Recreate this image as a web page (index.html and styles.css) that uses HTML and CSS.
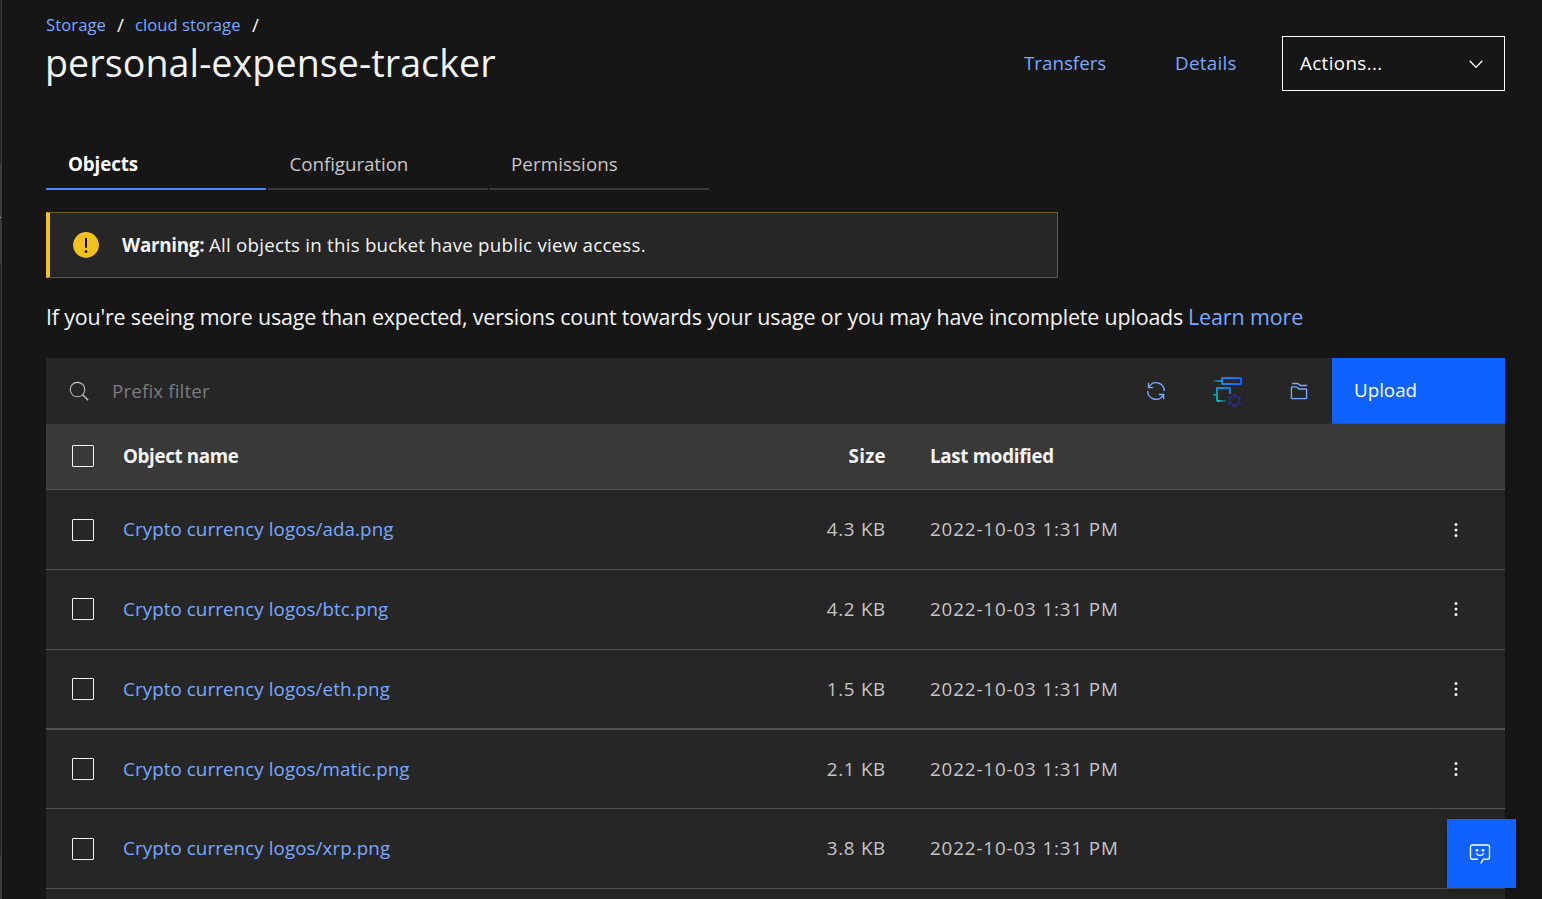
FILE: index.html
```
<!DOCTYPE html>
<html lang="en">
<head>
<meta charset="utf-8">
<title>personal-expense-tracker</title>
<link rel="stylesheet" href="styles.css">
</head>
<body>
<div class="app">
  <aside class="rail"><i class="rail-top"></i><i class="rail-active"></i><i class="rail-mark"></i><i class="rail-active rail-active-end"></i><i class="rail-rest"></i><i class="rail-active"></i></aside>
  <main class="main">
    <header class="header">
      <div>
        <nav class="crumbs"><a class="crumb-first">Storage</a><span>/</span><a class="crumb-second">cloud storage</a><span>/</span></nav>
        <h1 class="title">personal-expense-tracker</h1>
      </div>
      <div class="head-actions">
        <a class="transfers">Transfers</a>
        <a class="details">Details</a>
        <button class="dropdown"><span>Actions...</span>
          <svg width="22" height="22" viewBox="0 0 16 16" fill="#f4f4f4"><path d="M8 11 3 6l.7-.7L8 9.6l4.3-4.3.7.7z"/></svg>
        </button>
      </div>
    </header>

    <nav class="tabs">
      <a class="tab tab-selected">Objects</a>
      <a class="tab tab-config">Configuration</a>
      <a class="tab">Permissions</a>
    </nav>

    <section class="notice">
      <svg width="28" height="28" viewBox="0 0 20 20"><circle cx="10" cy="10" r="9.2" fill="#f1c21b"/><path d="M9.3 5h1.4v7H9.3z"/><circle cx="10" cy="14.7" r="1"/></svg>
      <p><b>Warning:</b><span>All objects in this bucket have public view access.</span></p>
    </section>

    <p class="usage"><span>If you're seeing more usage than expected, versions count towards your usage or you may have incomplete uploads</span><a>Learn more</a></p>

    <section class="table">
      <div class="toolbar">
        <svg class="search" width="22" height="22" viewBox="0 0 16 16" fill="#c6c6c6"><path d="m15 14.3-3.8-3.8a5.6 5.6 0 1 0-.7.7l3.8 3.8zM2 7a4.9 4.9 0 1 1 9.8 0A4.9 4.9 0 0 1 2 7z"/></svg>
        <span class="filter">Prefix filter</span>
        <div class="tools">
          <svg class="refresh" width="22" height="22" viewBox="0 0 32 32" fill="#78a9ff"><path d="M12 10H6.78A11 11 0 0 1 27 16h2A13 13 0 0 0 6 7.68V4H4v8h8zM20 22h5.22A11 11 0 0 1 5 16H3a13 13 0 0 0 23 8.32V28h2v-8h-8z"/></svg>
          <svg class="query" width="33" height="33" viewBox="0 0 33 33" fill="none">
            <defs>
              <linearGradient id="top" gradientUnits="userSpaceOnUse" x1="1" y1="0" x2="31" y2="0"><stop stop-color="#08bdba" stop-opacity="0"/><stop offset=".25" stop-color="#1192e8"/><stop offset="1" stop-color="#0f62fe"/></linearGradient>
              <linearGradient id="box" x1="0" y1="1" x2="1" y2="0"><stop stop-color="#08bdba"/><stop offset="1" stop-color="#0f77e8"/></linearGradient>
              <linearGradient id="tail" gradientUnits="userSpaceOnUse" x1="7" y1="0" x2="17" y2="0"><stop stop-color="#08bdba"/><stop offset="1" stop-color="#08bdba" stop-opacity="0"/></linearGradient>
            </defs>
            <path d="M1 6h10" stroke="url(#top)" stroke-width="1.8"/>
            <rect x="11" y="3" width="19" height="6" rx=".7" stroke="url(#top)" stroke-width="2"/>
            <path d="M6 26V13h13v6" stroke="url(#box)" stroke-width="1.800"/>
            <path d="M6 26h11v.1" stroke="url(#tail)" stroke-width="1.800"/>
            <path d="M2 19.800h4" stroke="#08a5a8" stroke-width="1.600"/>
            <circle cx="23.500" cy="25.500" r="4.600" stroke="#262f78" stroke-width="2"/>
            <path d="M23.500 18v3M23.500 30v3M17 21.700l2.600 1.500M27.400 27.800l2.600 1.500M17 29.300l2.600-1.500M27.400 23.200l2.600-1.500" stroke="#262f78" stroke-width="2.200"/>
          </svg>
          <svg width="22" height="22" viewBox="0 0 32 32" fill="#78a9ff"><path d="M26 28H6a2 2 0 0 1-2-2V11a2 2 0 0 1 2-2h5.670a2 2 0 0 1 1.200.400L16.670 12H26a2 2 0 0 1 2 2v12a2 2 0 0 1-2 2zM11.670 11H6v15h20V14H16z"/><path d="M28 9H17.670l-4-3H6V4h7.670a2 2 0 0 1 1.200.400L18.330 7H28z"/></svg>
        </div>
        <button class="upload">Upload</button>
      </div>

      <div class="row row-head row-up"><i class="box"></i><b class="c-name">Object name</b><b class="c-size">Size</b><b class="c-date">Last modified</b></div>
      <div class="row"><i class="box"></i><a class="c-name">Crypto currency logos/ada.png</a><span class="c-size">4.3 KB</span><span class="c-date">2022-10-03 1:31 PM</span><svg class="menu" width="6" height="16" viewBox="0 0 6 16"><circle cx="3" cy="2.5" r="1.5"/><circle cx="3" cy="8" r="1.5"/><circle cx="3" cy="13.5" r="1.5"/></svg></div>
      <div class="row row-up"><i class="box"></i><a class="c-name">Crypto currency logos/btc.png</a><span class="c-size">4.2 KB</span><span class="c-date">2022-10-03 1:31 PM</span><svg class="menu" width="6" height="16" viewBox="0 0 6 16"><circle cx="3" cy="2.5" r="1.5"/><circle cx="3" cy="8" r="1.5"/><circle cx="3" cy="13.5" r="1.5"/></svg></div>
      <div class="row row-thick"><i class="box"></i><a class="c-name">Crypto currency logos/eth.png</a><span class="c-size">1.5 KB</span><span class="c-date">2022-10-03 1:31 PM</span><svg class="menu" width="6" height="16" viewBox="0 0 6 16"><circle cx="3" cy="2.5" r="1.5"/><circle cx="3" cy="8" r="1.5"/><circle cx="3" cy="13.5" r="1.5"/></svg></div>
      <div class="row row-short"><i class="box"></i><a class="c-name">Crypto currency logos/matic.png</a><span class="c-size">2.1 KB</span><span class="c-date">2022-10-03 1:31 PM</span><svg class="menu" width="6" height="16" viewBox="0 0 6 16"><circle cx="3" cy="2.5" r="1.5"/><circle cx="3" cy="8" r="1.5"/><circle cx="3" cy="13.5" r="1.5"/></svg></div>
      <div class="row"><i class="box"></i><a class="c-name">Crypto currency logos/xrp.png</a><span class="c-size">3.8 KB</span><span class="c-date">2022-10-03 1:31 PM</span></div>
      <div class="row"></div>
    </section>
  </main>
  <button class="chat" aria-label="Chat">
    <svg width="22" height="22" viewBox="0 0 22 22" fill="none" stroke="#fff" stroke-width="1.4"><path d="M8.8 16.2H3.4A1.9 1.9 0 0 1 1.5 14.3V3.9A1.9 1.9 0 0 1 3.4 2h15.2a1.9 1.9 0 0 1 1.9 1.9v10.4a1.9 1.9 0 0 1-1.9 1.9h-4.200l-2.700 4.200"/><path d="M7.300 10.300c1.400 3 6 3 7.400 0"/><circle cx="8" cy="7.200" r="1.300" fill="#fff" stroke="none"/><circle cx="14" cy="7.200" r="1.300" fill="#fff" stroke="none"/></svg>
  </button>
</div>
</body>
</html>
```
FILE: styles.css
```
* { box-sizing: border-box; }

body {
  margin: 0;
  background: #161616;
  color: #f4f4f4;
  font: 18.75px/26px "Open Sans", "Noto Sans", sans-serif;
  letter-spacing: .09px;
}

a { color: #78a9ff; }
p, h1 { margin: 0; }
b { font-weight: 700; }
svg { display: block; flex: none; }

button {
  font: inherit;
  letter-spacing: inherit;
  color: #fff;
  border: 0;
  border-radius: 0;
  display: flex;
  align-items: center;
}

.app {
  display: flex;
  height: 899px;
  overflow: hidden;
}

.rail {
  width: 2px;
  flex: none;
  display: flex;
  flex-direction: column;
  background: #262626;
  border-right: 1px solid #393939;
}
.rail i { flex: none; }
.rail-top { height: 163px; }
.rail-active { height: 54px; background: #393939; }
.rail-mark { height: 1px; background: #a8a8a8; }
.rail-active-end { height: 46px; }
.rail-rest { height: 591px; }

.main {
  flex: 1;
  padding: 13px 37px 0 44px;
}

.header {
  height: 127px;
  display: flex;
  justify-content: space-between;
  align-items: flex-start;
}

.crumbs {
  display: flex;
  height: 24px;
  font-size: 16.6px;
  line-height: 24px;
}
.crumbs span {
  width: 29px;
  padding-left: 11px;
  font-size: 19px;
}
.crumbs .crumb-first { width: 60px; }
.crumb-second { width: 106px; letter-spacing: .05px; }

.title {
  font-size: 37.6px;
  font-weight: 400;
  line-height: 52px;
  letter-spacing: .1px;
  margin-left: -1px;
}

.head-actions {
  display: flex;
  align-items: center;
  padding-top: 23px;
}
.head-actions a, .dropdown span { padding-bottom: 2px; }
.transfers { width: 151px; letter-spacing: 0; }
.details { width: 107px; letter-spacing: .3px; }
.dropdown {
  width: 223px;
  height: 55px;
  padding: 0 17px;
  justify-content: space-between;
  border: 1px solid #fff;
  background: transparent;
  letter-spacing: .38px;
}

.tabs {
  display: flex;
  gap: 1.5px;
  height: 50px;
}
.tab {
  width: 220px;
  padding: 11px 22px 0;
  color: #c6c6c6;
  border-bottom: 2px solid #393939;
}
.tab-config { letter-spacing: -.06px; }
.tab-selected {
  color: #fff;
  font-weight: 700;
  letter-spacing: -.1px;
  border-color: #4589ff;
}

.notice {
  display: flex;
  align-items: center;
  width: 1012px;
  height: 66px;
  margin-top: 22px;
  padding-left: 22px;
  gap: 22px;
  background: #262626;
  border: 1px solid #6f5b1e;
  border-left: 4px solid #f1c21b;
  letter-spacing: .22px;
}
.notice p { display: flex; }
.notice b { width: 87px; letter-spacing: -.25px; }

.usage {
  display: flex;
  gap: 4px;
  margin-top: 24px;
  font-size: 21.45px;
  line-height: 30px;
  letter-spacing: -.175px;
}
.usage span { width: 1138px; white-space: nowrap; }
.usage a { letter-spacing: -.1px; }

.table { margin-top: 26px; }

.toolbar {
  display: flex;
  align-items: center;
  height: 66px;
  padding-left: 22px;
  background: #262626;
}
.filter { margin-left: 22px; color: #7c7c7c; flex: 1; letter-spacing: .15px; }
.tools { display: flex; align-items: center; padding-right: 22px; }
.query { margin: 0 44px 0 44px; }
.upload {
  width: 173px;
  height: 66px;
  padding: 0 22px 2px;
  background: #0f62fe;
  border-bottom: 1px solid #1b55c4;
  letter-spacing: 0;
}

.row {
  display: grid;
  grid-template-columns: 77px 563px 200px 44px 521px 54px;
  align-items: center;
  height: 80px;
  background: #262626;
  border-bottom: 1px solid #525252;
  color: #c6c6c6;
}
.row a, .row b, .row span { padding-bottom: 2px; }
.row-up { padding-bottom: 2px; }
.row-up a, .row-up b, .row-up span, .row-thick a, .row-thick span, .row-short a, .row-short span { padding-bottom: 0; }
.row-head {
  height: 66px;
  background: #393939;
  color: #f4f4f4;
}
.row-thick { border-bottom-width: 2px; }
.row-short { height: 79px; }
.box {
  width: 22px;
  height: 22px;
  margin-left: 26px;
  border: 1px solid #f4f4f4;
  border-radius: 1px;
}
.c-size { text-align: right; letter-spacing: .75px; }
.c-date { grid-column: 5; letter-spacing: .88px; }
.row-head .c-name { letter-spacing: -.35px; }
.row-head .c-date { letter-spacing: -.3px; }
.row-head .c-size { letter-spacing: .3px; }
.menu { fill: #f4f4f4; margin-left: 2px; }

.chat {
  position: fixed;
  left: 1447px;
  top: 819px;
  width: 69px;
  height: 69px;
  padding: 0 0 0 22px;
  background: #0f62fe;
  box-shadow: 0 2px 10px rgba(0, 0, 0, .3);
}
```
